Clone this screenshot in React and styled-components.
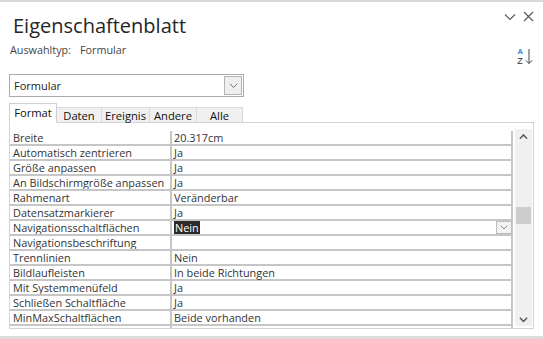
import React from "react";
import styled, { createGlobalStyle } from "styled-components";

const Global = createGlobalStyle`
  html, body { margin: 0; padding: 0; background: #fff; }
  body { font-family: "Open Sans", "Noto Sans", sans-serif; }
  * { box-sizing: border-box; }
`;

const Pane = styled.div`
  width: 543px;
  height: 339px;
  display: flex;
  flex-direction: column;
  border-top: 2px solid #d9d9d9;
  background: #fff;
  overflow: hidden;
`;

const Header = styled.div`
  display: flex;
  justify-content: space-between;
  height: 72px;
`;

const TitleBlock = styled.div`
  display: flex;
  flex-direction: column;
  padding-left: 10px;
`;

const Title = styled.h1`
  margin: 11px 0 0 3px;
  font-weight: 400;
  font-size: 20px;
  line-height: 26px;
  color: #262626;
`;

const Sub = styled.div`
  margin-top: 3px;
  font-size: 10.8px;
  color: #444;
  display: flex;
  gap: 9px;
`;

const Tools = styled.div`
  display: flex;
  flex-direction: column;
  align-items: flex-end;
  padding: 9px 9px 0 0;
  gap: 26px;
`;

const Controls = styled.div`
  display: flex;
  gap: 7px;
  align-items: center;
`;

const IconBtn = styled.span`
  display: inline-flex;
  color: #555;
`;

const Combo = styled.div`
  margin-left: 9px;
  width: 235px;
  height: 23px;
  border: 1px solid #ababab;
  display: flex;
  align-items: center;
  justify-content: space-between;
  padding: 0 1px 0 4px;
  font-size: 11px;
  color: #222;
`;

const ComboBtn = styled.span`
  width: 18px;
  height: 19px;
  border: 1px solid #b4b4b4;
  background: #efefef;
  display: flex;
  align-items: center;
  justify-content: center;
`;

const TabBar = styled.div`
  display: flex;
  align-items: flex-end;
  margin: 5px 0 0 9px;
  height: 20px;
  position: relative;
  z-index: 1;
`;

const Tab = styled.div`
  width: ${(p) => p.$w}px;
  height: ${(p) => (p.$active ? 20 : 15)}px;
  background: ${(p) => (p.$active ? "#fff" : "#f0f0f0")};
  border: 1px solid ${(p) => (p.$active ? "#cfcfcf" : "#dadada")};
  border-bottom: ${(p) => (p.$active ? "1px solid #fff" : "none")};
  border-left: ${(p) => (p.$first || p.$active ? undefined : "none")};
  margin-bottom: ${(p) => (p.$active ? "-1px" : "0")};
  font-size: 11.2px;
  color: #111;
  display: flex;
  align-items: center;
  justify-content: center;
  line-height: 1;
  padding-top: ${(p) => (p.$active ? "0" : "1px")};
`;

const Panel = styled.div`
  margin-left: 9px;
  width: 525px;
  height: 207px;
  border: 1px solid #d4d4d4;
  display: flex;
  padding: 0 1px 0 0;
  overflow: hidden;
`;

const Grid = styled.div`
  width: 505px;
  padding-top: 8px;
  display: flex;
  flex-direction: column;
`;

const Row = styled.div`
  display: grid;
  grid-template-columns: 160px 1fr;
  height: 15px;
  flex: none;
  border-bottom: 2px solid #c6c6c6;
`;

const Label = styled.div`
  font-size: 10.9px;
  line-height: 14px;
  color: #333;
  padding-left: 3px;
  white-space: nowrap;
  overflow: hidden;
`;

const Value = styled.div`
  border-left: 2px solid #c6c6c6;
  border-right: 2px solid #c6c6c6;
  font-size: 10.9px;
  line-height: 13px;
  color: #333;
  padding-left: 2px;
  display: flex;
  align-items: center;
  justify-content: space-between;
  white-space: nowrap;
`;

const Selected = styled.span`
  background: #2b2b2b;
  color: #fff;
  padding: 0 1px;
  line-height: 13px;
`;

const CellBtn = styled.span`
  width: 16px;
  height: 13px;
  border: 1px solid #bdbdbd;
  background: #f3f3f3;
  display: flex;
  align-items: center;
  justify-content: center;
  margin-right: -1px;
`;

const Scroll = styled.div`
  width: 17px;
  margin: 6px 0 0 2px;
  height: 197px;
  background: #f0f0f0;
  display: flex;
  flex-direction: column;
  align-items: center;
  justify-content: space-between;
  position: relative;
  padding: 5px 0 4px;
`;

const Thumb = styled.div`
  position: absolute;
  left: 1px;
  right: 1px;
  top: 78px;
  height: 17px;
  background: #cdcdcd;
`;

const Footer = styled.div`
  margin-top: auto;
  height: 3px;
  background: #dcdcdc;
`;

const Chevron = ({ up, size = 9, color = "#555", w = 1.3 }) => (
  <svg width={size} height={size * 0.6} viewBox="0 0 10 6">
    <path
      d={up ? "M1 5.2 L5 1 L9 5.2" : "M1 0.8 L5 5 L9 0.8"}
      fill="none"
      stroke={color}
      strokeWidth={w}
    />
  </svg>
);

const rows = [
  ["Breite", "20.317cm"],
  ["Automatisch zentrieren", "Ja"],
  ["Größe anpassen", "Ja"],
  ["An Bildschirmgröße anpassen", "Ja"],
  ["Rahmenart", "Veränderbar"],
  ["Datensatzmarkierer", "Ja"],
  ["Navigationsschaltflächen", "Nein", true],
  ["Navigationsbeschriftung", ""],
  ["Trennlinien", "Nein"],
  ["Bildlaufleisten", "In beide Richtungen"],
  ["Mit Systemmenüfeld", "Ja"],
  ["Schließen Schaltfläche", "Ja"],
  ["MinMaxSchaltflächen", "Beide vorhanden"],
  ["", ""],
];

const tabs = [
  ["Format", 48],
  ["Daten", 45],
  ["Ereignis", 48],
  ["Andere", 47],
  ["Alle", 46],
];

export default function App() {
  return (
    <>
      <Global />
      <Pane>
        <Header>
          <TitleBlock>
            <Title>Eigenschaftenblatt</Title>
            <Sub>
              <span>Auswahltyp:</span>
              <span>Formular</span>
            </Sub>
          </TitleBlock>
          <Tools>
            <Controls>
              <IconBtn>
                <svg width="12" height="8" viewBox="0 0 12 8">
                  <path d="M1 1.5 L6 6.5 L11 1.5" fill="none" stroke="#555" strokeWidth="1.1" />
                </svg>
              </IconBtn>
              <IconBtn>
                <svg width="11" height="11" viewBox="0 0 11 11">
                  <path d="M1 1 L10 10 M10 1 L1 10" fill="none" stroke="#555" strokeWidth="1.1" />
                </svg>
              </IconBtn>
            </Controls>
            <IconBtn>
              <svg width="17" height="17" viewBox="0 0 17 17">
                <text x="0.5" y="6" fontSize="7.5" fontWeight="700" fill="#2b88d8" fontFamily="Liberation Sans, sans-serif">A</text>
                <text x="0.2" y="15.5" fontSize="9" fill="#333" fontFamily="Liberation Sans, sans-serif">Z</text>
                <path d="M12 1 L12 15.5 M8.8 12.3 L12 15.5 L15.2 12.3" fill="none" stroke="#444" strokeWidth="1" />
              </svg>
            </IconBtn>
          </Tools>
        </Header>
        <Combo>
          <span>Formular</span>
          <ComboBtn>
            <Chevron size={9} color="#666" w={1} />
          </ComboBtn>
        </Combo>
        <TabBar>
          {tabs.map(([t, w], i) => (
            <Tab key={t} $w={w} $active={i === 0} $first={i === 0}>
              {t}
            </Tab>
          ))}
        </TabBar>
        <Panel>
          <Grid>
            {rows.map(([l, v, sel], i) => (
              <Row key={i}>
                <Label>{l}</Label>
                <Value>
                  {sel ? <Selected>{v}</Selected> : <span>{v}</span>}
                  {sel && (
                    <CellBtn>
                      <Chevron size={8} color="#666" w={1} />
                    </CellBtn>
                  )}
                </Value>
              </Row>
            ))}
          </Grid>
          <Scroll>
            <Chevron up size={9} color="#555" w={1.6} />
            <Thumb />
            <Chevron size={9} color="#555" w={1.6} />
          </Scroll>
        </Panel>
        <Footer />
      </Pane>
    </>
  );
}
